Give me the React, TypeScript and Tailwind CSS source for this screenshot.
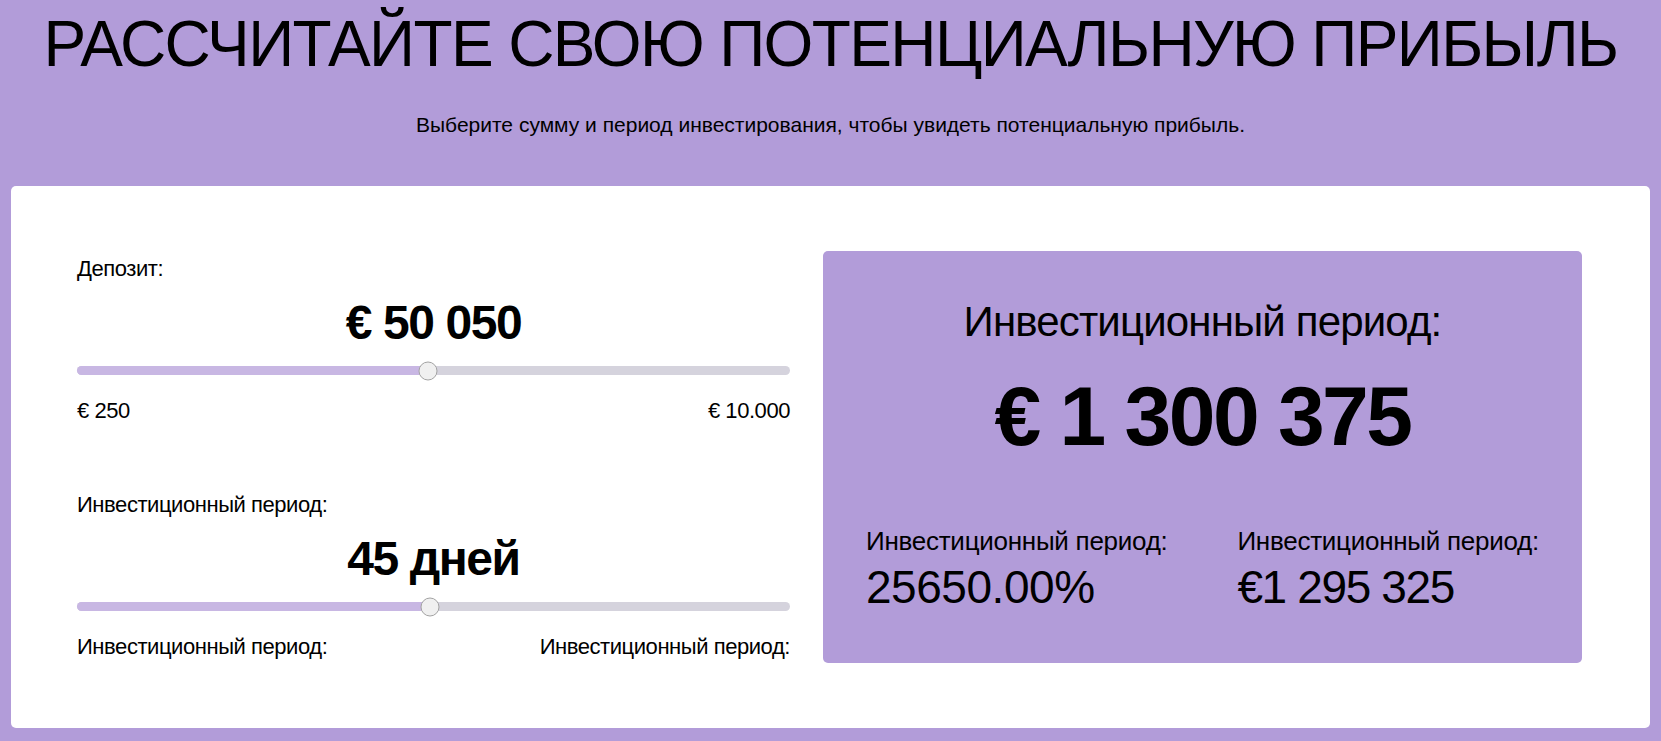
import React from "react";

const font = { fontFamily: '"Liberation Sans", Arial, sans-serif' };

function Slider({ value }: { value: number }) {
  return (
    <div className="relative h-[9px] w-full rounded-full bg-[#d5d3dd]">
      <div
        className="h-full rounded-full bg-[#c8b7e3]"
        style={{ width: `${value}%` }}
      />
      <div
        className="absolute top-1/2 h-[19px] w-[19px] -translate-x-1/2 -translate-y-1/2 rounded-full border border-[#a3a3a3] bg-[#f0f0f0]"
        style={{ left: `${value}%` }}
      />
    </div>
  );
}

function Field({
  label,
  value,
  slider,
  min,
  max,
}: {
  label: string;
  value: string;
  slider: number;
  min: string;
  max: string;
}) {
  return (
    <div className="flex flex-col">
      <div className="text-[22px] leading-none tracking-[-0.02em]">{label}</div>
      <div className="mt-[19px] text-center text-[48px] font-bold leading-none tracking-[-0.03em]">
        {value}
      </div>
      <div className="mt-[19px]">
        <Slider value={slider} />
      </div>
      <div className="mt-[25px] flex justify-between text-[22px] leading-none tracking-[-0.02em]">
        <span>{min}</span>
        <span>{max}</span>
      </div>
    </div>
  );
}

export default function App() {
  return (
    <main
      className="min-h-screen bg-[#b29cd9] px-[11px] pb-[13px] pt-[12px] text-black"
      style={font}
    >
      <h1 className="text-center text-[64px] font-normal leading-none tracking-[-0.025em]">
        РАССЧИТАЙТЕ СВОЮ ПОТЕНЦИАЛЬНУЮ ПРИБЫЛЬ
      </h1>
      <p className="mt-[38px] text-center text-[21px] leading-none">
        Выберите сумму и период инвестирования, чтобы увидеть потенциальную прибыль.
      </p>

      <section className="mt-[51px] flex items-start gap-[33px] rounded-[5px] bg-white pb-[65px] pl-[66px] pr-[68px] pt-[65px]">
        <div className="mt-[7px] flex w-[713px] shrink-0 flex-col gap-[72px]">
          <Field
            label="Депозит:"
            value="€ 50 050"
            slider={49.2}
            min="€ 250"
            max="€ 10.000"
          />
          <Field
            label="Инвестиционный период:"
            value="45 дней"
            slider={49.5}
            min="Инвестиционный период:"
            max="Инвестиционный период:"
          />
        </div>

        <div className="flex flex-1 flex-col rounded-[5px] bg-[#b29cd9] px-[43px] pb-[53px] pt-[50px]">
          <div className="text-center text-[42px] leading-none tracking-[-0.02em]">
            Инвестиционный период:
          </div>
          <div className="mt-[31px] text-center text-[84px] font-bold leading-none tracking-[-0.03em]">
            € 1 300 375
          </div>
          <div className="mt-[70px] flex justify-between">
            <div className="flex flex-col gap-[10px]">
              <span className="text-[26px] leading-none tracking-[-0.01em]">
                Инвестиционный период:
              </span>
              <span className="text-[46px] leading-none tracking-[-0.01em]">
                25650.00%
              </span>
            </div>
            <div className="flex flex-col gap-[10px]">
              <span className="text-[26px] leading-none tracking-[-0.01em]">
                Инвестиционный период:
              </span>
              <span className="text-[46px] leading-none tracking-[-0.03em]">
                €1 295 325
              </span>
            </div>
          </div>
        </div>
      </section>
    </main>
  );
}
